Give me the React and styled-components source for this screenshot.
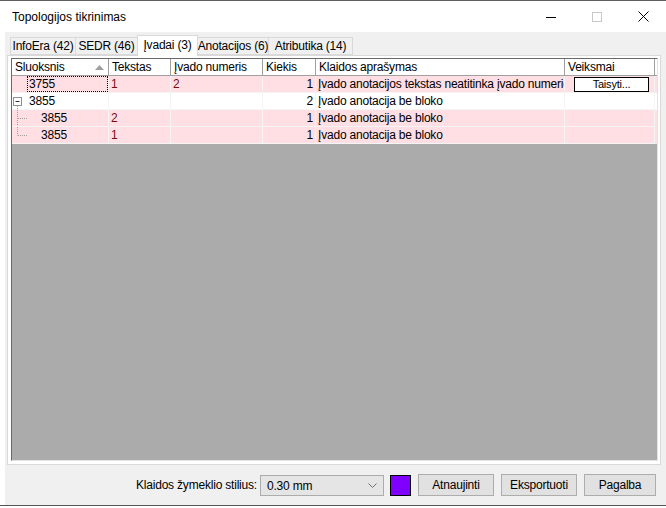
import styled, { createGlobalStyle } from 'styled-components';

const GlobalStyle = createGlobalStyle`
  html, body {
    margin: 0;
    padding: 0;
    background: #fff;
  }
  * {
    box-sizing: border-box;
  }
`;

const font = `'Liberation Sans', Arial, sans-serif`;

const Window = styled.div`
  width: 666px;
  height: 508px;
  display: flex;
  flex-direction: column;
  font-family: ${font};
  font-size: 12px;
  color: #000;
  background: #fff;
  overflow: hidden;
`;

const TitleBar = styled.div`
  height: 32px;
  flex: none;
  display: flex;
  align-items: center;
  border-top: 1px solid #5f5f5f;
  background: #fff;
`;

const Title = styled.div`
  flex: 1;
  padding-left: 12px;
  font-size: 12px;
`;

const WinButton = styled.div`
  width: 46px;
  height: 31px;
  display: flex;
  align-items: center;
  justify-content: center;
`;

const Body = styled.div`
  flex: 1;
  margin-left: 5px;
  background: #f0f0f0;
  display: flex;
  flex-direction: column;
  padding-top: 3px;
  letter-spacing: -0.2px;
`;

const BottomEdge = styled.div`
  height: 3px;
  flex: none;
  border-top: 1px solid #555;
  background: #fff;
`;

const TabStrip = styled.div`
  height: 20px;
  flex: none;
  display: flex;
  align-items: flex-end;
  padding-left: 5px;
`;

const Tab = styled.div`
  width: ${(p) => p.$w}px;
  height: ${(p) => (p.$active ? 21 : 18)}px;
  margin-bottom: ${(p) => (p.$active ? -1 : 0)}px;
  position: relative;
  z-index: ${(p) => (p.$active ? 2 : 1)};
  background: ${(p) => (p.$active ? '#fff' : '#f0f0f0')};
  border: 1px solid #d9d9d9;
  border-bottom: ${(p) => (p.$active ? 'none' : '1px solid #d9d9d9')};
  margin-left: ${(p) => (p.$first ? 0 : -1)}px;
  display: flex;
  align-items: center;
  justify-content: center;
  padding-bottom: ${(p) => (p.$active ? 2 : 0)}px;
  white-space: nowrap;
`;

const TabPanel = styled.div`
  height: 410px;
  flex: none;
  margin: 0 5px 0 2px;
  background: #fff;
  border: 1px solid #d9d9d9;
  padding: 2px 2px 3px 3px;
  display: flex;
`;

const Grid = styled.div`
  flex: 1;
  background: #ababab;
  border-top: 1px solid #696969;
  border-left: 1px solid #696969;
  border-right: 1px solid #e3e3e3;
  border-bottom: 1px solid #e3e3e3;
  overflow: hidden;
`;

const HeaderRow = styled.div`
  display: flex;
  height: 17px;
  background: #fff;
  border-bottom: 1px solid #a0a0a0;
`;

const HeaderCell = styled.div`
  width: ${(p) => p.$w}px;
  flex: none;
  position: relative;
  border-right: 1px solid #a0a0a0;
  padding-left: 3px;
  display: flex;
  align-items: center;
  white-space: nowrap;
  overflow: hidden;
`;

const SortArrow = styled.svg`
  position: absolute;
  right: 4px;
  top: 6px;
`;

const Row = styled.div`
  display: flex;
  height: 17px;
  background: ${(p) => (p.$pink ? '#ffdfe4' : '#fff')};
`;

const Cell = styled.div`
  width: ${(p) => p.$w}px;
  flex: none;
  border-right: 1px solid #f4f4f4;
  border-bottom: 1px solid #f4f4f4;
  display: flex;
  align-items: center;
  justify-content: ${(p) => (p.$right ? 'flex-end' : 'flex-start')};
  padding: ${(p) => (p.$right ? '0 2px 0 0' : '0 0 0 2px')};
  color: ${(p) => (p.$dark ? '#7a0c0c' : '#000')};
  white-space: nowrap;
  overflow: hidden;
`;

const TreeCell = styled(Cell)`
  padding: 0;
  position: relative;
`;

const TreeGuide = styled.svg`
  flex: none;
  display: block;
`;

const FocusText = styled.div`
  flex: 1;
  height: 16px;
  margin-left: 15px;
  padding-left: 1px;
  border: 1px dotted #000;
  display: flex;
  align-items: center;
`;

const ActionButton = styled.div`
  width: 75px;
  height: 15px;
  margin-left: 7px;
  background: #fff;
  border: 1px solid #000;
  display: flex;
  align-items: center;
  justify-content: center;
  font-size: 11px;
`;

const Footer = styled.div`
  flex: 1;
  display: flex;
  align-items: center;
  justify-content: flex-end;
  padding: 0 10px 0 0;
`;

const Label = styled.span`
  margin-right: 3px;
`;

const Select = styled.div`
  width: 124px;
  height: 21px;
  background: #e5e5e5;
  border: 1px solid #acacac;
  display: flex;
  align-items: center;
  justify-content: space-between;
  padding: 1px 6px 0 6px;
`;

const Swatch = styled.div`
  width: 21px;
  height: 21px;
  margin: 0 7px 0 6px;
  background: ${(p) => p.$color};
  border: 1px solid #000;
`;

const Button = styled.div`
  width: ${(p) => p.$w}px;
  height: 22px;
  margin-left: ${(p) => p.$gap}px;
  background: #e1e1e1;
  border: 1px solid #adadad;
  display: flex;
  align-items: center;
  justify-content: center;
`;

const cols = [97, 62, 92, 53, 249, 90];
const headers = ['Sluoksnis', 'Tekstas', 'Įvado numeris', 'Kiekis', 'Klaidos aprašymas', 'Veiksmai'];

const tabs = [
  { label: 'InfoEra (42)', w: 66 },
  { label: 'SEDR (46)', w: 63 },
  { label: 'Įvadai (3)', w: 61, active: true },
  { label: 'Anotacijos (6)', w: 72 },
  { label: 'Atributika (14)', w: 85 },
];

const rows = [
  { kind: 'focus', layer: '3755', text: '1', num: '2', count: '1', desc: 'Įvado anotacijos tekstas neatitinka įvado numerio', action: true, pink: true },
  { kind: 'parent', layer: '3855', text: '', num: '', count: '2', desc: 'Įvado anotacija be bloko', pink: false },
  { kind: 'mid', layer: '3855', text: '2', num: '', count: '1', desc: 'Įvado anotacija be bloko', pink: true },
  { kind: 'last', layer: '3855', text: '1', num: '', count: '1', desc: 'Įvado anotacija be bloko', pink: true },
];

function Guide({ kind }) {
  const dot = { stroke: '#a0a0a0', strokeWidth: 1, strokeDasharray: '1 1' };
  if (kind === 'parent') {
    return (
      <TreeGuide width="17" height="17" viewBox="0 0 17 17">
        <rect x="1.5" y="4.5" width="8" height="8" fill="#fff" stroke="#919191" />
        <line x1="3.5" y1="8.5" x2="7.5" y2="8.5" stroke="#333" />
        <line x1="5.5" y1="13" x2="5.5" y2="17" {...dot} />
      </TreeGuide>
    );
  }
  return (
    <TreeGuide width="29" height="17" viewBox="0 0 29 17">
      <line x1="5.5" y1="0" x2="5.5" y2={kind === 'mid' ? 17 : 8.5} {...dot} />
      <line x1="6" y1="8.5" x2="15" y2="8.5" {...dot} />
    </TreeGuide>
  );
}

function LayerCell({ row }) {
  if (row.kind === 'focus') {
    return (
      <TreeCell $w={cols[0]}>
        <FocusText>{row.layer}</FocusText>
      </TreeCell>
    );
  }
  return (
    <TreeCell $w={cols[0]}>
      <Guide kind={row.kind} />
      {row.layer}
    </TreeCell>
  );
}

export default function App() {
  return (
    <>
      <GlobalStyle />
      <Window>
        <TitleBar>
          <Title>Topologijos tikrinimas</Title>
          <WinButton>
            <svg width="10" height="10" viewBox="0 0 10 10">
              <line x1="0" y1="5.5" x2="10" y2="5.5" stroke="#000" />
            </svg>
          </WinButton>
          <WinButton>
            <svg width="10" height="10" viewBox="0 0 10 10">
              <rect x="0.5" y="0.5" width="9" height="9" fill="none" stroke="#c8c8c8" />
            </svg>
          </WinButton>
          <WinButton>
            <svg width="11" height="11" viewBox="0 0 11 11">
              <path d="M0.5 0.5 L10.5 10.5 M10.5 0.5 L0.5 10.5" stroke="#000" strokeWidth="1" />
            </svg>
          </WinButton>
        </TitleBar>
        <Body>
          <TabStrip>
            {tabs.map((t, i) => (
              <Tab key={t.label} $w={t.w} $active={t.active} $first={i === 0}>
                {t.label}
              </Tab>
            ))}
          </TabStrip>
          <TabPanel>
            <Grid>
              <HeaderRow>
                {headers.map((h, i) => (
                  <HeaderCell key={h} $w={cols[i]}>
                    {h}
                    {i === 0 && (
                      <SortArrow width="9" height="5" viewBox="0 0 9 5">
                        <path d="M0 5 L4.5 0 L9 5 Z" fill="#a0a0a0" />
                      </SortArrow>
                    )}
                  </HeaderCell>
                ))}
              </HeaderRow>
              {rows.map((r, i) => (
                <Row key={i} $pink={r.pink}>
                  <LayerCell row={r} />
                  <Cell $w={cols[1]} $dark>{r.text}</Cell>
                  <Cell $w={cols[2]} $dark>{r.num}</Cell>
                  <Cell $w={cols[3]} $right>{r.count}</Cell>
                  <Cell $w={cols[4]}>{r.desc}</Cell>
                  <Cell $w={cols[5]}>
                    {r.action && <ActionButton>Taisyti...</ActionButton>}
                  </Cell>
                </Row>
              ))}
            </Grid>
          </TabPanel>
          <Footer>
            <Label>Klaidos žymeklio stilius:</Label>
            <Select>
              <span>0.30 mm</span>
              <svg width="9" height="5" viewBox="0 0 9 5">
                <path d="M0.5 0.5 L4.5 4.5 L8.5 0.5" fill="none" stroke="#707070" />
              </svg>
            </Select>
            <Swatch $color="#8000ff" />
            <Button $w={76} $gap={0}>Atnaujinti</Button>
            <Button $w={76} $gap={7}>Eksportuoti</Button>
            <Button $w={72} $gap={7}>Pagalba</Button>
          </Footer>
        </Body>
        <BottomEdge />
      </Window>
    </>
  );
}
